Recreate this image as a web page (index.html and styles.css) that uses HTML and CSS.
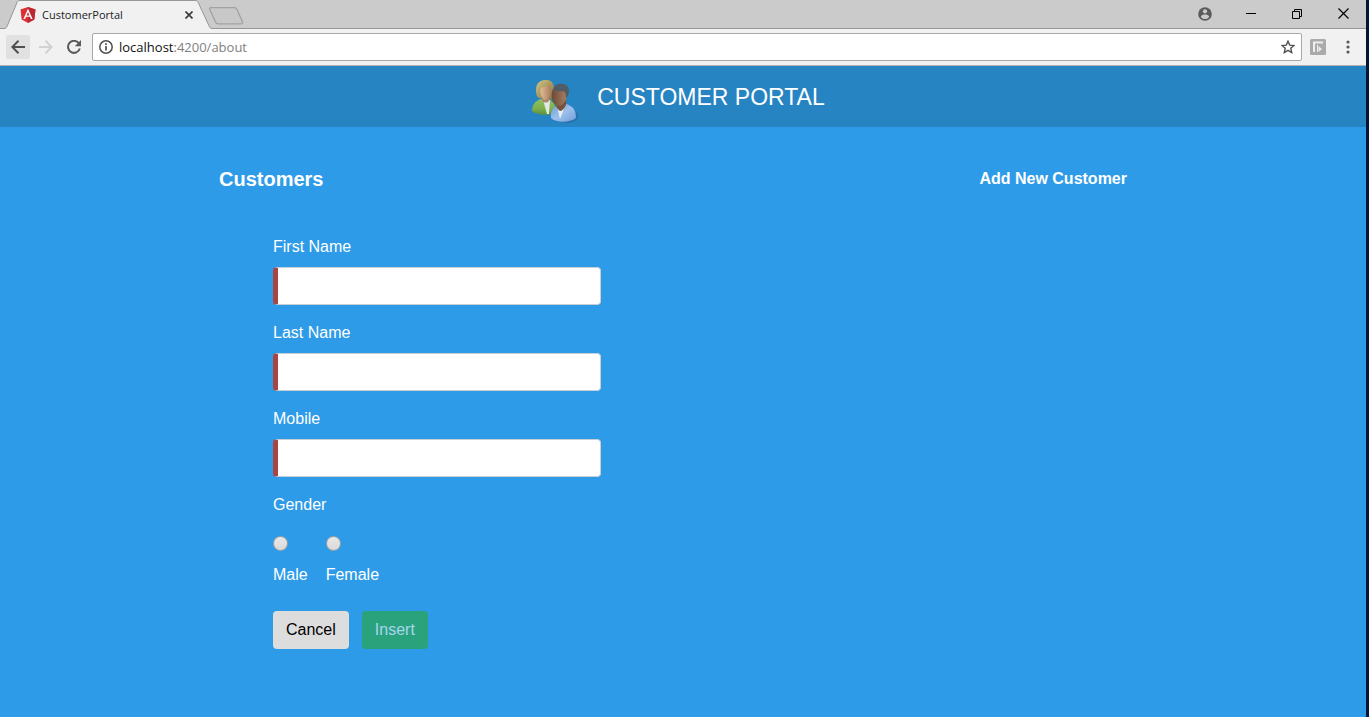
FILE: index.html
```html
<!DOCTYPE html>
<html lang="en">
<head>
<meta charset="utf-8">
<title>CustomerPortal</title>
<link rel="stylesheet" href="styles.css">
</head>
<body>
<div class="window">
  <div class="tabstrip">
    <div class="tab">
      <svg class="tab-shape" width="208" height="29" viewBox="0 0 208 29" aria-hidden="true">
        <path d="M0 28.500C2 28.500 2.500 27.500 3.300 25.800L13 2.500C13.700 1 14.500 .5 16 .5H191C192.500 .5 193.500 1 194.200 2.500L205 25.800C206 27.800 206.500 28.500 208 28.500V29H0z" fill="#f1f1f1"/>
        <path d="M0 28.500C2 28.500 2.500 27.500 3.300 25.800L13 2.500C13.700 1 14.500 .5 16 .5H191C192.500 .5 193.500 1 194.200 2.500L205 25.800C206 27.800 206.500 28.500 208 28.500" fill="none" stroke="#979797"/>
      </svg>
      <svg class="favicon" width="16" height="16" viewBox="0 0 16 16" aria-hidden="true">
        <path d="M8 0 15.500 2.600 14.300 12.500 8 16 1.700 12.500.5 2.600z" fill="#dd2f36"/>
        <path d="M8 0 15.500 2.600 14.300 12.500 8 16z" fill="#bd2733"/>
        <path d="M8 1.800 3.400 12.100H5.100L6 9.800H10L10.900 12.100H12.600zM8 5 9.400 8.400H6.600z" fill="#fff" fill-rule="evenodd"/>
      </svg>
      <span class="tab-title">CustomerPortal</span>
      <button class="icon-button tab-close" type="button" aria-label="Close tab">
        <svg width="8" height="8" viewBox="0 0 8 8"><path d="M.5.5l7 7M7.500.5l-7 7" stroke="#3c3c3c" stroke-width="1.700"/></svg>
      </button>
    </div>
    <button class="icon-button new-tab" type="button" aria-label="New tab">
      <svg width="36" height="18" viewBox="0 0 36 18"><path d="M3 .7H26.500Q28.200 .7 29 2.500L34.500 15Q35 16.800 33 16.800H10Q8.200 16.800 7.500 15L1.800 2.500Q1 .7 3 .7z" fill="#c8c8c8" stroke="#a2a2a2" stroke-width="1.300"/></svg>
    </button>
    <div class="window-controls">
      <button class="icon-button control" type="button" aria-label="Profile">
        <svg width="14" height="14" viewBox="0 0 14 14"><circle cx="7" cy="7" r="6.800" fill="#5b5b5b"/><circle cx="7" cy="4.300" r="2.100" fill="#cbcbcb"/><path d="M2.800 9.700C3 8 5.500 7.500 7 7.500S11 8 11.200 9.700C10.300 11.200 8.800 12 7 12S3.700 11.200 2.800 9.700z" fill="#cbcbcb"/></svg>
      </button>
      <button class="icon-button control" type="button" aria-label="Minimize">
        <svg width="10" height="11" viewBox="0 0 10 11"><path d="M0 5.500H10" stroke="#000"/></svg>
      </button>
      <button class="icon-button control" type="button" aria-label="Restore">
        <svg width="10" height="10" viewBox="0 0 10 10"><path d="M.5 2.500h7v7h-7zM2.500 2.500v-2h7v7h-2" fill="none" stroke="#000"/></svg>
      </button>
      <button class="icon-button control" type="button" aria-label="Close">
        <svg width="11" height="11" viewBox="0 0 11 11"><path d="M.5.5l10 10M10.500.5l-10 10" stroke="#000" stroke-width="1.200"/></svg>
      </button>
    </div>
  </div>

  <div class="toolbar">
    <button class="icon-button nav nav-active" type="button" aria-label="Back">
      <svg width="14" height="14" viewBox="0 0 14 14"><path d="M14 7H1.500M7.500 .8 1.300 7l6.200 6.200" fill="none" stroke="#505050" stroke-width="2"/></svg>
    </button>
    <button class="icon-button nav" type="button" aria-label="Forward">
      <svg width="14" height="14" viewBox="0 0 14 14"><path d="M0 7H12.500M6.500 .8 12.700 7l-6.200 6.200" fill="none" stroke="#d2d2d2" stroke-width="2"/></svg>
    </button>
    <button class="icon-button nav" type="button" aria-label="Reload">
      <svg width="14" height="14" viewBox="0 0 14 14"><path d="M11.800 3.200A6 6 0 1 0 12.800 8.500" fill="none" stroke="#5a5a5a" stroke-width="2"/><path d="M14 0V6.200H7.800z" fill="#5a5a5a"/></svg>
    </button>
    <div class="address">
      <svg width="14" height="14" viewBox="0 0 14 14" aria-hidden="true"><circle cx="7" cy="7" r="6.200" fill="none" stroke="#505050" stroke-width="1.500"/><path d="M7 6v4.600M7 3.200v1.700" stroke="#505050" stroke-width="1.700"/></svg>
      <div class="url">localhost<span class="url-path">:4200/about</span></div>
      <button class="icon-button" type="button" aria-label="Bookmark">
        <svg width="14" height="14" viewBox="0 0 14 14"><path d="M7 1.200 8.700 5.100 13 5.500 9.800 8.300 10.700 12.500 7 10.300 3.300 12.500 4.200 8.300 1 5.500 5.300 5.100z" fill="none" stroke="#505050" stroke-width="1.400"/></svg>
      </button>
    </div>
    <button class="icon-button extension" type="button" aria-label="Extension">
      <svg width="16" height="16" viewBox="0 0 16 16"><rect width="16" height="16" rx="1.500" fill="#aaa"/><path d="M4 13V3.500H13" fill="none" stroke="#eee" stroke-width="2"/><path d="M7.500 6v7" stroke="#eee"/><path d="M8.500 7 12 10 8.500 13z" fill="#eee"/></svg>
    </button>
    <button class="icon-button menu" type="button" aria-label="Menu">
      <svg width="4" height="14" viewBox="0 0 4 14"><g fill="#5a5a5a"><circle cx="2" cy="2" r="1.600"/><circle cx="2" cy="7" r="1.600"/><circle cx="2" cy="12" r="1.600"/></g></svg>
    </button>
  </div>

  <header class="banner">
    <svg width="56" height="50" viewBox="0 0 56 50" aria-hidden="true">
      <defs>
        <linearGradient id="green" x1="0" y1="0" x2="0" y2="1"><stop offset="0" stop-color="#8fc063"/><stop offset=".6" stop-color="#80b04c"/><stop offset="1" stop-color="#5c8f3f"/></linearGradient>
        <linearGradient id="blue" x1="0" y1="0" x2="1" y2="1"><stop offset="0" stop-color="#6d9fd8"/><stop offset=".5" stop-color="#9dc0ea"/><stop offset="1" stop-color="#6f9edb"/></linearGradient>
        <linearGradient id="light" x1="0" y1="0" x2="1" y2="0"><stop offset="0" stop-color="#e6bd96"/><stop offset="1" stop-color="#a37c60"/></linearGradient>
        <linearGradient id="dark" x1="0" y1="0" x2="1" y2="0"><stop offset="0" stop-color="#6b4a38"/><stop offset="1" stop-color="#a98062"/></linearGradient>
        <linearGradient id="hair" x1="0" y1="0" x2="1" y2="1"><stop offset="0" stop-color="#cfc587"/><stop offset="1" stop-color="#8b7238"/></linearGradient>
        <radialGradient id="shade"><stop offset=".5" stop-color="#17547f" stop-opacity=".7"/><stop offset="1" stop-color="#17547f" stop-opacity="0"/></radialGradient>
      </defs>
      <ellipse cx="40" cy="40" rx="13" ry="8" fill="url(#shade)"/>
      <path d="M5 35C5 29 8 25 14 23H21C26 25 29 29 29 37 21 40 9 39 5 35z" fill="url(#green)"/>
      <path d="M16 24 20 38H22L23 24z" fill="#dfe9e4"/>
      <path d="M15 19h7v6q-3 3-7 0z" fill="#b08663"/>
      <path d="M10 20C8 13 9 7 14 5C19 3 25 4 26 8C28 13 27 19 27 23Q24 25 22 22H15Q12 23 10 20z" fill="url(#hair)"/>
      <path d="M13 12Q18 11 22 9Q25 11 24 16C23 21 21 24 18 24C15 23 13 18 13 12z" fill="url(#light)"/>
      <path d="M10 14Q10 5 18 4Q26 4 26 10Q21 8 15 11Q13 13 13 20Q10 18 10 14z" fill="url(#hair)"/>
      <path d="M24 42C23 34 27 30 34 28H39C46 30 49 34 49 42 43 47 29 47 24 42z" fill="url(#blue)"/>
      <path d="M30 30 33 43 38 30z" fill="#e7f0f9"/>
      <path d="M31 24h8v5q-3 6-6 6-3-2-4-5z" fill="#76513c"/>
      <path d="M26 13Q33 9 40 14Q41 23 36 28C32 32 26 29 25 23C24 18 25 15 26 13z" fill="url(#dark)"/>
      <path d="M26 14C27 9 31 7 36 8 42 9 43 14 41 20L39 22Q39 17 37 15Q32 16 26 14z" fill="#515c64"/>
    </svg>
    <h1 class="banner-title">CUSTOMER PORTAL</h1>
  </header>

  <main class="content">
    <div class="heading-row">
      <h2 class="page-title">Customers</h2>
      <a class="add-link" href="#add">Add New Customer</a>
    </div>
    <form class="customer-form">
      <div class="field">
        <label for="first-name">First Name</label>
        <input class="text-input" id="first-name" type="text">
      </div>
      <div class="field">
        <label for="last-name">Last Name</label>
        <input class="text-input" id="last-name" type="text">
      </div>
      <div class="field">
        <label for="mobile">Mobile</label>
        <input class="text-input" id="mobile" type="text">
      </div>
      <fieldset class="gender">
        <legend>Gender</legend>
        <div class="options">
          <div class="option"><input class="radio" type="radio" name="gender" id="male"><label for="male">Male</label></div>
          <div class="option"><input class="radio" type="radio" name="gender" id="female"><label for="female">Female</label></div>
        </div>
      </fieldset>
      <div class="actions">
        <button class="button cancel" type="button">Cancel</button>
        <button class="button insert" type="submit" disabled>Insert</button>
      </div>
    </form>
  </main>
</div>
</body>
</html>
```

FILE: styles.css
```css
* { box-sizing: border-box; }

body {
  margin: 0;
  background: #2e9be8;
  color: #fff;
  font: 16px/24px "Liberation Sans", Arial, sans-serif;
}

.window {
  min-height: 100vh;
  border-right: 3px solid #021536;
}

.icon-button {
  display: flex;
  align-items: center;
  justify-content: center;
  padding: 0;
  border: 0;
  background: none;
}

svg { display: block; flex: none; }

.tabstrip {
  display: flex;
  height: 29px;
  padding-left: 4px;
  background: #cbcbcb;
  border-bottom: 1px solid #979797;
}

.tab {
  position: relative;
  display: flex;
  align-items: center;
  width: 204px;
  height: 29px;
  padding: 0 13px 0 16px;
  color: #222;
  font: 11px/16px "Open Sans", "Noto Sans", sans-serif;
}

.tab-shape { position: absolute; left: 0; top: 0; }
.favicon, .tab-title, .tab-close { position: relative; }
.tab-title { flex: 1; margin-left: 6px; }
.tab-close { width: 12px; height: 16px; }
.new-tab { width: 36px; height: 32px; }

.window-controls { display: flex; margin-left: auto; }
.control { width: 46px; height: 27px; }

.toolbar {
  display: flex;
  align-items: center;
  gap: 4px;
  height: 37px;
  padding: 0 10px 0 6px;
  background: #f1f1f1;
  border-bottom: 1px solid #b2b2b2;
}

.nav { width: 24px; height: 24px; border-radius: 2px; }
.nav-active { background: #e1e1e1; }

.address {
  display: flex;
  flex: 1;
  align-items: center;
  gap: 6px;
  height: 28px;
  margin-left: 2px;
  padding: 0 6px;
  background: #fff;
  border: 1px solid #a8a8a8;
  border-radius: 2px;
}

.url {
  flex: 1;
  color: #111;
  font: 13px/20px "Open Sans", "Noto Sans", sans-serif;
}

.url-path { color: #808080; }
.extension { width: 24px; height: 24px; }
.menu { width: 16px; height: 24px; margin-left: 6px; }

.banner {
  display: flex;
  align-items: center;
  justify-content: center;
  gap: 14px;
  height: 61px;
  padding: 8px 14px 0 0;
  background: #2784c3;
}

.banner-title {
  margin: 0 0 8px;
  font-size: 23px;
  font-weight: 400;
  line-height: 28px;
}

.content {
  max-width: 928px;
  margin: 0 auto;
  padding: 40px 0;
}

.heading-row {
  display: flex;
  align-items: center;
  justify-content: space-between;
  padding-right: 20px;
}

.page-title { margin: 0; font-size: 20px; line-height: 24px; }
.add-link { color: inherit; font-weight: 700; text-decoration: none; }

.customer-form {
  max-width: 382px;
  padding: 44px 0 0 54px;
}

.field { margin-bottom: 16px; }
.field label { display: block; margin-bottom: 8px; }

.text-input {
  display: block;
  width: 100%;
  height: 38px;
  padding: 6px 12px;
  border: 1px solid #c9cfd4;
  border-left: 5px solid #a94442;
  border-radius: 4px;
  background: #fff;
  font: inherit;
}

.gender { margin: 0; padding: 0; border: 0; }
.gender legend { padding: 0; }
.options { display: flex; gap: 18px; padding-top: 19px; }
.option { display: flex; flex-direction: column; gap: 12px; }

.radio {
  appearance: none;
  width: 15px;
  height: 15px;
  margin: 0;
  border: 1px solid #a0a0a0;
  border-radius: 50%;
  background: linear-gradient(#e8e8e8, #dadada);
}

.actions { display: flex; gap: 13px; padding-top: 24px; }

.button {
  height: 38px;
  padding: 0 13px;
  border: 0;
  border-radius: 4px;
  font: inherit;
}

.cancel { background: #ddd; color: #000; }
.insert { background: #2aa37d; color: #a7d5ef; }
```
